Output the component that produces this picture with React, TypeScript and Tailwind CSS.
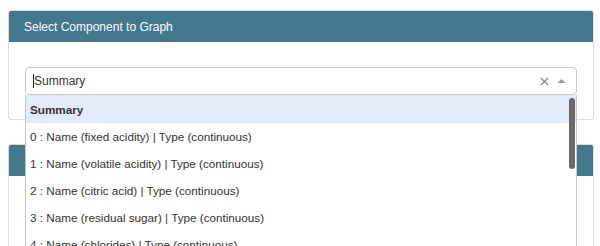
import React from 'react';

const options = [
  'Summary',
  '0 : Name (fixed acidity) | Type (continuous)',
  '1 : Name (volatile acidity) | Type (continuous)',
  '2 : Name (citric acid) | Type (continuous)',
  '3 : Name (residual sugar) | Type (continuous)',
  '4 : Name (chlorides) | Type (continuous)',
];

const Cursor = () => (
  <svg width="12" height="18" viewBox="0 0 12 18" className="absolute left-[195px] top-[124px]">
    <path d="M1 1 L1 14 L4 11 L6.5 16.5 L8.5 15.5 L6 10 L10.5 10 Z" fill="#111" stroke="#fff" strokeWidth="1" />
  </svg>
);

export default function App() {
  return (
    <div className="relative w-[600px] h-[246px] overflow-hidden bg-white pt-[10px] pl-[8px] pr-[6px]" style={{ fontFamily: '"Liberation Sans", Arial, sans-serif' }}>
      {/* Panel 1 */}
      <div className="border border-[#dcdcdc] rounded-[3px] bg-white">
        <div className="h-[31px] bg-[#41788e] flex items-center px-[15px] text-white text-[12px] rounded-t-[2px]">
          Select Component to Graph
        </div>
        <div className="px-[16px] pt-[25px] pb-[24px]">
          <div className="relative h-[28px] border border-[#c8c8c8] rounded-[4px] flex items-center pl-[7px] pr-[10px] text-[12px] text-[#333]">
            <span className="w-px h-[14px] bg-[#222]"></span>
            <span>Summary</span>
            <div className="ml-auto flex items-center gap-[8px] text-[#888]">
              <svg width="9" height="9" viewBox="0 0 9 9"><path d="M1 1 L8 8 M8 1 L1 8" stroke="#8a8a8a" strokeWidth="1.4" /></svg>
              <svg width="9" height="6" viewBox="0 0 9 6"><path d="M0.5 5 L4.5 1 L8.5 5 Z" fill="#999" /></svg>
            </div>

            {/* Menu */}
            <div className="absolute left-[-1px] right-[-1px] top-[27px] h-[200px] bg-white border-x border-[#c8c8c8] border-t border-t-[#e6e6e6] z-10">
              {options.map((o, i) => (
                <div key={o} className={`h-[27px] flex items-center pl-[4px] text-[11.7px] text-[#333] ${i === 0 ? 'bg-[#e2ebfa] font-bold' : ''}`}>
                  {o}
                </div>
              ))}
              <div className="absolute right-[1px] top-[2px] w-[6px] h-[71px] rounded-full bg-[#6b6b6b]"></div>
            </div>
          </div>
        </div>
      </div>

      {/* Panel 2 */}
      <div className="mt-[24px] border border-[#dcdcdc] rounded-[3px] bg-white h-[120px]">
        <div className="h-[31px] bg-[#41788e] rounded-t-[2px]"></div>
      </div>

      <Cursor />
    </div>
  );
}
